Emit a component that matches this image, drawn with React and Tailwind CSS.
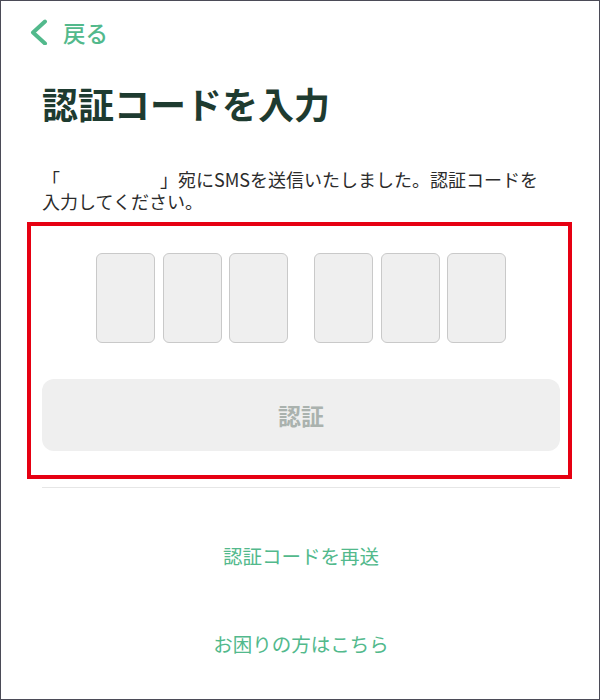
import { useState } from "react"

function CodeBox({ value }) {
  return (
    <div className="w-[59px] h-[90px] rounded-[6px] border-[1.5px] border-[#c9c9c9] bg-[#efefef] flex items-center justify-center text-[28px] text-[#333]">
      {value}
    </div>
  )
}

export default function App() {
  const [code] = useState(["", "", "", "", "", ""])

  return (
    <div className="w-[600px] h-[700px] box-border border border-[#4b4b57] bg-white overflow-hidden font-['Noto_Sans_CJK_JP','Noto_Sans',sans-serif]">
      <div className="pt-[19px] pl-[41px] pr-[39px]">
        {/* Back */}
        <button className="-ml-[12px] h-[24px] flex items-center gap-[15px] text-[#52b98c]">
          <svg width="18" height="26" viewBox="0 0 18 26" fill="none" className="shrink-0">
            <polyline
              points="15,2.5 3,13.5 15,24.5"
              stroke="#52b98c"
              strokeWidth="4"
              strokeLinecap="round"
              strokeLinejoin="round"
            />
          </svg>
          <span className="text-[22.5px] leading-none font-medium">戻る</span>
        </button>

        {/* Title */}
        <h1 className="mt-[41px] text-[36px] leading-none font-bold text-[#1e3b30]">認証コードを入力</h1>

        {/* Description */}
        <p className="mt-[47px] text-[18px] leading-[22px] text-[#2b2b2b] whitespace-nowrap">
          「<span className="inline-block w-[100px]" />」宛にSMSを送信いたしました。認証コードを
          <br />
          入力してください。
        </p>

        {/* Highlighted input area */}
        <div className="mt-[10px] -ml-[15px] -mr-[12px] border-[4px] border-[#e60012] pl-[11px] pr-[8px] pt-[27px] pb-[24px]">
          <div className="flex justify-center gap-[26px]">
            <div className="flex gap-[7.5px]">
              {code.slice(0, 3).map((v, i) => (
                <CodeBox key={i} value={v} />
              ))}
            </div>
            <div className="flex gap-[7.5px]">
              {code.slice(3).map((v, i) => (
                <CodeBox key={i} value={v} />
              ))}
            </div>
          </div>
          <button
            disabled
            className="mt-[36px] w-full h-[72px] rounded-[12px] bg-[#efefef] text-[23px] font-semibold text-[#aab2ae] flex items-center justify-center"
          >
            認証
          </button>
        </div>

        <div className="mt-[8px] h-px bg-[#e6e6e6]" />

        {/* Links */}
        <div className="flex flex-col items-center">
          <a className="mt-[58px] text-[19.5px] leading-none text-[#52b98c]">認証コードを再送</a>
          <a className="mt-[68px] text-[19.5px] leading-none text-[#52b98c]">お困りの方はこちら</a>
        </div>
      </div>
    </div>
  )
}
